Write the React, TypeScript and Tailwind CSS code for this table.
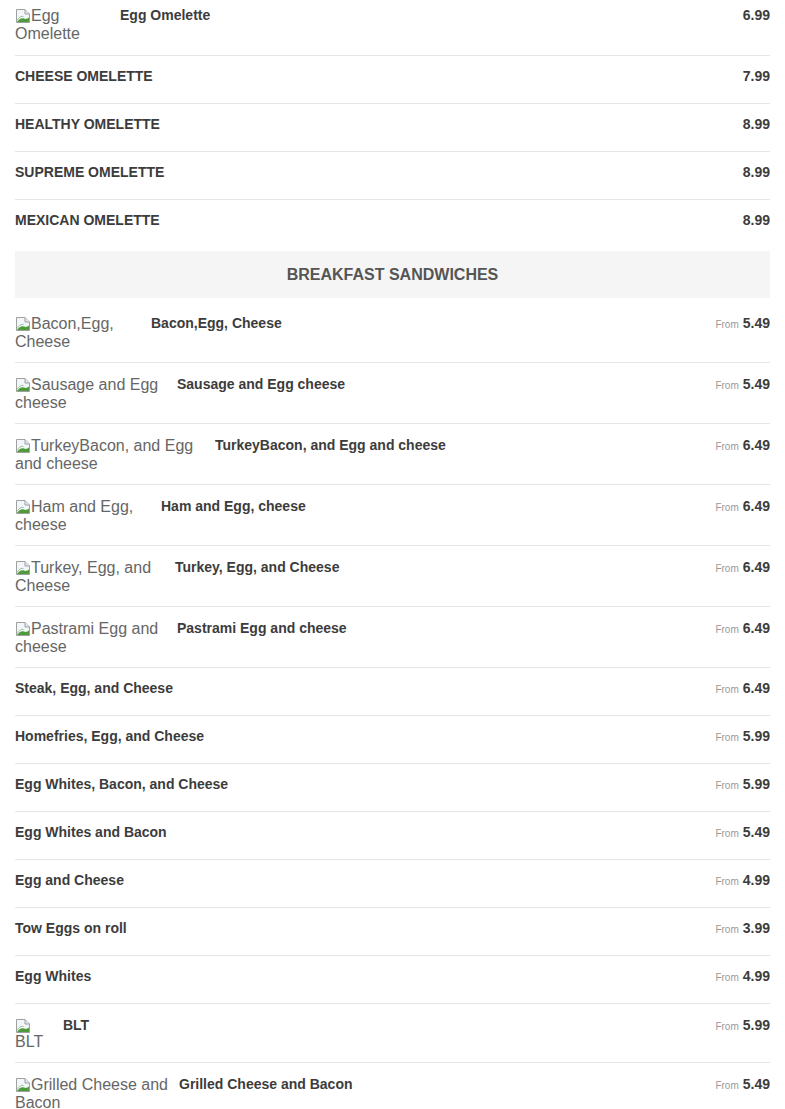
import React from 'react'

type Item = {
  name: string
  price: string
  from?: boolean
  alt?: string[]
  altW?: string
  pad?: string
  border?: boolean
}

const omelettes: Item[] = [
  { name: 'Egg Omelette', price: '6.99', alt: ['Egg', 'Omelette'], altW: 'w-[105px]', pad: 'pt-[7px] pb-[12px]' },
  { name: 'CHEESE OMELETTE', price: '7.99' },
  { name: 'HEALTHY OMELETTE', price: '8.99' },
  { name: 'SUPREME OMELETTE', price: '8.99' },
  { name: 'MEXICAN OMELETTE', price: '8.99', pad: 'pt-[10px] pb-[21px]', border: false },
]

const sandwiches: Item[] = [
  { name: 'Bacon,Egg, Cheese', price: '5.49', alt: ['Bacon,Egg,', 'Cheese'], altW: 'w-[136px]', pad: 'pt-[17px] pb-[11px]' },
  { name: 'Sausage and Egg cheese', price: '5.49', alt: ['Sausage and Egg', 'cheese'], altW: 'w-[162px]' },
  { name: 'TurkeyBacon, and Egg and cheese', price: '6.49', alt: ['TurkeyBacon, and Egg', 'and cheese'], altW: 'w-[200px]' },
  { name: 'Ham and Egg, cheese', price: '6.49', alt: ['Ham and Egg,', 'cheese'], altW: 'w-[146px]' },
  { name: 'Turkey, Egg, and Cheese', price: '6.49', alt: ['Turkey, Egg, and', 'Cheese'], altW: 'w-[160px]' },
  { name: 'Pastrami Egg and cheese', price: '6.49', alt: ['Pastrami Egg and', 'cheese'], altW: 'w-[162px]' },
  { name: 'Steak, Egg, and Cheese', price: '6.49' },
  { name: 'Homefries, Egg, and Cheese', price: '5.99' },
  { name: 'Egg Whites, Bacon, and Cheese', price: '5.99' },
  { name: 'Egg Whites and Bacon', price: '5.49' },
  { name: 'Egg and Cheese', price: '4.99' },
  { name: 'Tow Eggs on roll', price: '3.99' },
  { name: 'Egg Whites', price: '4.99' },
  { name: 'BLT', price: '5.99', alt: ['', 'BLT'], altW: 'w-[48px]', pad: 'pt-[13px] pb-[11px]' },
  { name: 'Grilled Cheese and Bacon', price: '5.49', alt: ['Grilled Cheese and', 'Bacon'], altW: 'w-[164px]' },
].map((i) => ({ ...i, from: true }))

function BrokenImage() {
  return (
    <svg width="16" height="16" viewBox="0 0 16 16" className="inline-block align-top mt-px">
      <path d="M1.5 1.5h8.5l4.5 4.5v8.5h-13z" fill="#f2f6fa" stroke="#a0a0a0" />
      <path d="M10 1.5v4.5h4.5" fill="#dfe6ee" stroke="#a0a0a0" />
      <path d="M2 14 C4 10.5 7 9.5 9 10.5 C11 11.5 12.5 10.5 14 9.5 V14 Z" fill="#4f9b3c" />
      <path d="M2 12.5 C4 9 6.5 8 8.5 8.5" fill="none" stroke="#8cc47a" strokeWidth="1" />
    </svg>
  )
}

function Row({ item }: { item: Item }) {
  const pad = item.pad ?? (item.alt ? 'pt-[13px] pb-[11px]' : 'pt-[10px] pb-[17px]')
  const border = item.border === false ? '' : 'border-b border-[#e6e6e6]'
  const shift = item.alt ? '-mt-[2px]' : ''
  return (
    <div className={`flex items-start ${pad} ${border}`}>
      {item.alt && (
        <div className={`${item.altW} shrink-0 text-[16px] leading-[18px] text-[#666] whitespace-nowrap`}>
          <div className={item.alt[0] ? 'h-[18px]' : 'h-[16px]'}>
            <BrokenImage />
            {item.alt[0]}
          </div>
          <div>{item.alt[1]}</div>
        </div>
      )}
      <div className={`flex-1 h-[20px] text-[14px] leading-[20px] font-bold text-[#3c3c3c] ${shift}`}>{item.name}</div>
      <div className={`flex items-baseline gap-[4px] h-[20px] leading-[20px] ${shift}`}>
        {item.from && <span className="text-[10px] leading-[20px] text-[#999]">From</span>}
        <span className="text-[14px] leading-[20px] font-bold text-[#3c3c3c]">{item.price}</span>
      </div>
    </div>
  )
}

export default function App() {
  return (
    <div className="bg-white px-[15px] font-['Liberation_Sans',Arial,sans-serif] h-[1109px] overflow-hidden">
      <div>
        {omelettes.map((item, i) => (
          <Row key={i} item={item} />
        ))}
      </div>
      <div className="h-[47px] bg-[#f5f5f5] flex items-center justify-center">
        <h2 className="text-[16px] font-bold text-[#555] uppercase">Breakfast Sandwiches</h2>
      </div>
      <div>
        {sandwiches.map((item, i) => (
          <Row key={i} item={item} />
        ))}
      </div>
    </div>
  )
}
